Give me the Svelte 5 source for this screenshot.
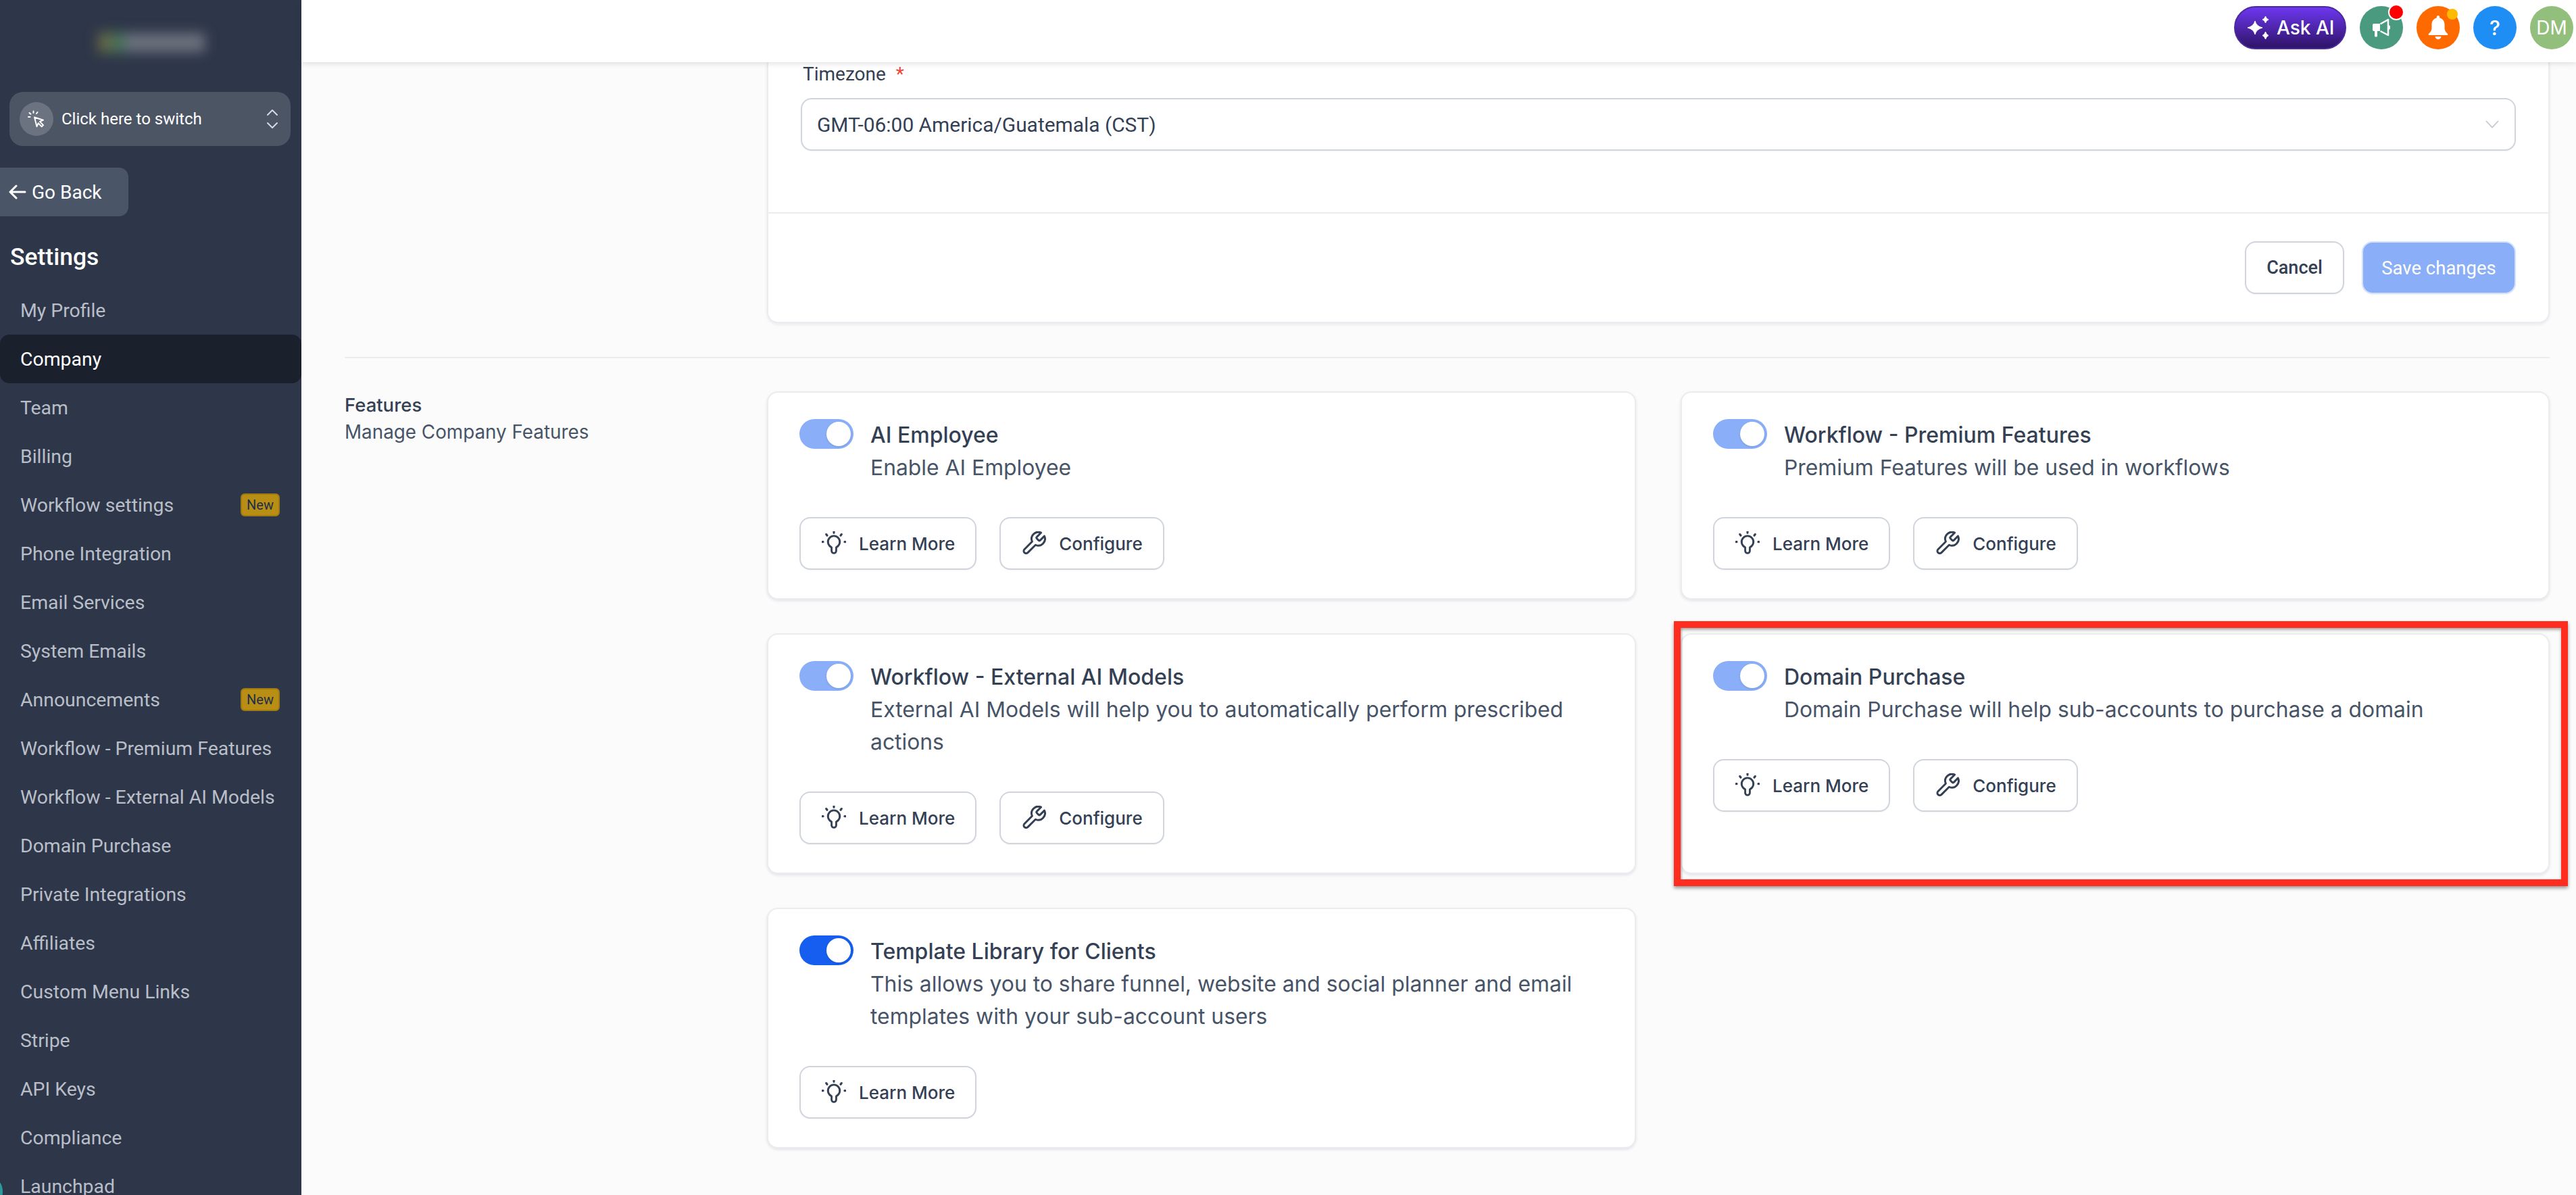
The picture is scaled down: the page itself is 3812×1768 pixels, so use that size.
<script>
  const nav = [
    { label: 'My Profile' }, { label: 'Company', active: true }, { label: 'Team' }, { label: 'Billing' },
    { label: 'Workflow settings', badge: true }, { label: 'Phone Integration' }, { label: 'Email Services' },
    { label: 'System Emails' }, { label: 'Announcements', badge: true }, { label: 'Workflow - Premium Features' },
    { label: 'Workflow - External AI Models' }, { label: 'Domain Purchase' }, { label: 'Private Integrations' },
    { label: 'Affiliates' }, { label: 'Custom Menu Links' }, { label: 'Stripe' }, { label: 'API Keys' },
    { label: 'Compliance' }, { label: 'Launchpad' }
  ];
  const features = [
    { title: 'AI Employee', desc: 'Enable AI Employee', configure: true },
    { title: 'Workflow - Premium Features', desc: 'Premium Features will be used in workflows', configure: true },
    { title: 'Workflow - External AI Models', desc: 'External AI Models will help you to automatically perform prescribed actions', configure: true },
    { title: 'Domain Purchase', desc: 'Domain Purchase will help sub-accounts to purchase a domain', configure: true },
    { title: 'Template Library for Clients', desc: 'This allows you to share funnel, website and social planner and email templates with your sub-account users', strong: true }
  ];
</script>

<div class="page">
  <aside class="sidebar">
    <div class="logo">
      <span class="logo-mark"></span>
      <span class="logo-text"></span>
    </div>
    <div class="switcher">
      <span class="switch-icon">
        <svg viewBox="0 0 26 26" width="26" height="26" fill="none" stroke="#fff" stroke-width="2" stroke-linecap="round" stroke-linejoin="round">
          <path d="M10 10.500l13 4.200-5 2.200 5 5.200-2.300 2.300-5-5.200-2.200 5z" />
          <path d="M8.500 1.500v2.500M2.500 4l2 1.800M1 10h2.500M14.500 3l-1.500 2" />
        </svg>
      </span>
      <span class="switch-text">Click here to switch</span>
      <svg class="updown" viewBox="0 0 18 30" width="18" height="30" fill="none" stroke="#d5d9e0" stroke-width="2" stroke-linecap="round" stroke-linejoin="round">
        <path d="M2 9l7-7 7 7M2 21l7 7 7-7" />
      </svg>
    </div>
    <div class="goback">
      <svg viewBox="0 0 26 22" width="26" height="22" fill="none" stroke="#fff" stroke-width="3" stroke-linecap="round" stroke-linejoin="round">
        <path d="M24 11H3M11 2l-9 9 9 9" />
      </svg>
      <span>Go Back</span>
    </div>
    <h2 class="settings">Settings</h2>
    <nav class="nav">
      {#each nav as item}
        <div class="nav-item" class:active={item.active}>
          <span>{item.label}</span>
          {#if item.badge}<span class="badge">New</span>{/if}
        </div>
      {/each}
    </nav>
    <span class="chat-peek"></span>
  </aside>

  <div class="main">
    <header class="topbar">
      <div class="ask">
        <svg viewBox="0 0 33 36" width="33" height="36" fill="#fff" stroke="#fff" stroke-width="1" stroke-linejoin="round">
          <path d="M12 8Q14 16 23 18Q14 20 12 28Q10 20 1 18Q10 16 12 8z" />
          <path d="M27.500 1Q28.500 5 32 6Q28.500 7 27.500 11Q26.500 7 23 6Q26.500 5 27.500 1z" />
          <path d="M27.500 24Q28.500 28 32 29.500Q28.500 31 27.500 35Q26.500 31 23 29.500Q26.500 28 27.500 24z" />
        </svg>
        <span>Ask AI</span>
      </div>
      <div class="circle green">
        <svg viewBox="0 0 28 28" width="28" height="28">
          <path d="M3 8h9v11H8v7a1.500 1.500 0 0 1-1.500 1.500h-1A1.500 1.500 0 0 1 4 26v-7H3a2 2 0 0 1-2-2v-7a2 2 0 0 1 2-2z" fill="#fff" />
          <path d="M12.500 8.500L24 2v23l-11.500-6" fill="none" stroke="#fff" stroke-width="2.500" stroke-linejoin="round" />
          <rect x="24" y="10.500" width="3" height="6" rx="1.500" fill="#fff" />
        </svg>
        <span class="dot red"></span>
      </div>
      <div class="circle orange">
        <svg viewBox="0 0 30 36" width="30" height="36" fill="#fff">
          <path d="M15 0c1.300 0 2.200 1 2.200 2.200v1.300C21.700 4.700 24.500 8.500 24.500 13v5c0 4 1.500 6 4.500 9 .8.800.4 2-.8 2H1.800c-1.200 0-1.600-1.200-.8-2 3-3 4.500-5 4.500-9v-5c0-4.500 2.800-8.300 7.300-9.500V2.200C12.800 1 13.700 0 15 0z" />
          <path d="M10.500 31h9c-.4 2.600-2.200 4.300-4.500 4.300s-4.100-1.700-4.500-4.300z" />
        </svg>
        <span class="dot yellow"></span>
      </div>
      <div class="circle blue"><span class="q">?</span></div>
      <div class="circle avatar">DM</div>
    </header>

    <div class="content">
      <section class="top-section">
        <div></div>
        <div class="form-card">
          <div class="form-body">
            <div class="field-label">Timezone <span class="req">*</span></div>
            <div class="select">
              <span>GMT-06:00 America/Guatemala (CST)</span>
              <svg viewBox="0 0 20 12" width="20" height="12" fill="none" stroke="#c4c7cc" stroke-width="1.800"><path d="M1 1l9 9.500L19 1" /></svg>
            </div>
          </div>
          <div class="form-foot">
            <button class="btn plain">Cancel</button>
            <button class="btn save">Save changes</button>
          </div>
        </div>
      </section>

      <section class="features">
        <div class="intro">
          <div class="intro-title">Features</div>
          <div class="intro-sub">Manage Company Features</div>
        </div>
        <div class="grid">
          {#each features as f}
            <div class="card">
              <div class="card-head">
                <span class="toggle" class:strong={f.strong}><span class="knob"></span></span>
                <div class="card-text">
                  <div class="card-title">{f.title}</div>
                  <div class="card-desc">{f.desc}</div>
                </div>
              </div>
              <div class="actions">
                <button class="btn act">
                  <svg viewBox="0.500 0.500 23 23" width="36" height="36" fill="none" stroke="#344054" stroke-width="1.800" stroke-linecap="round" stroke-linejoin="round">
                    <path d="M9.800 15.700a5.600 5.600 0 1 1 4.400 0v3.300a2.200 2.200 0 0 1-4.400 0z" />
                    <path d="M12 .8v1.200M4.800 3.400l.8 1.100M19.200 3.400l-.8 1.100M1.200 10.500h.6M22.200 10.500h.6" stroke-width="2" />
                  </svg>
                  <span>Learn More</span>
                </button>
                {#if f.configure}
                  <button class="btn act">
                    <svg viewBox="1.200 1.200 21.800 21.800" width="36" height="36" fill="none" stroke="#344054" stroke-width="1.800" stroke-linecap="round" stroke-linejoin="round">
                      <path d="M14.700 6.300a1 1 0 0 0 0 1.400l1.600 1.600a1 1 0 0 0 1.400 0l3.770-3.770a6 6 0 0 1-7.940 7.940l-6.910 6.910a2.120 2.120 0 0 1-3-3l6.910-6.910a6 6 0 0 1 7.940-7.940l-3.760 3.760z" />
                    </svg>
                    <span>Configure</span>
                  </button>
                {/if}
              </div>
            </div>
          {/each}
        </div>
      </section>
    </div>
  </div>

  <div class="annotation"></div>
</div>

<style>
  :global(body) { margin: 0; background: #fbfbfc; }
  .page { position: relative; display: flex; width: 3812px; height: 1768px; overflow: hidden; background: #fbfbfc; font-family: Inter, "Liberation Sans", sans-serif; }

  .sidebar { position: relative; flex: 0 0 446px; height: 1768px; overflow: hidden; background: #2e3749; font-family: Roboto, "Liberation Sans", sans-serif; color: #fff; box-sizing: border-box; }
  .logo { display: flex; align-items: center; height: 136px; padding-left: 145px; padding-bottom: 10px; box-sizing: border-box; filter: blur(9px); }
  .logo-mark { width: 40px; height: 30px; background: linear-gradient(90deg, #6f6540, #3d7560); }
  .logo-text { width: 118px; height: 28px; background: #6c717d; }
  .switcher { display: flex; align-items: center; height: 80px; margin: 0 16px 0 14px; padding: 0 18px 0 15px; border-radius: 20px; background: #4c5564; box-sizing: border-box; }
  .switch-icon { display: flex; align-items: center; justify-content: center; flex: 0 0 50px; height: 50px; border-radius: 50%; background: #6b7280; }
  .switch-text { flex: 1; margin-left: 12px; font-size: 24px; font-weight: 450; color: #fff; }
  .goback { display: flex; align-items: center; gap: 8px; width: 190px; height: 72px; margin-top: 32px; padding-left: 13px; border-radius: 0 14px 14px 0; background: #4a5568; box-sizing: border-box; font-size: 28px; font-weight: 450; }
  .settings { margin: 36px 0 0 15px; font-size: 35.500px; line-height: 48px; font-weight: 500; color: #fff; }
  .nav { display: flex; flex-direction: column; margin-top: 19px; }
  .nav-item { display: flex; align-items: center; justify-content: space-between; flex: 0 0 72px; height: 72px; padding: 0 32px 0 30px; box-sizing: border-box; border-radius: 14px; font-size: 28.400px; color: #b9bec8; }
  .nav-item.active { background: #1a202c; color: #fff; font-weight: 450; }
  .badge { display: flex; align-items: center; justify-content: center; width: 58px; height: 34px; box-sizing: border-box; border: 2px solid #a17b12; border-radius: 6px; background: #b98e14; color: #1d2f4a; font-size: 20px; font-weight: 450; }
  .chat-peek { position: absolute; left: -16px; bottom: -12px; width: 20px; height: 34px; border-radius: 50%; background: #2b9a9a; }

  .main { flex: 1; min-width: 0; display: flex; flex-direction: column; }
  .topbar { position: relative; z-index: 2; flex: 0 0 92px; display: flex; align-items: center; justify-content: flex-end; gap: 20px; padding: 0 4px 10px 0; box-sizing: border-box; background: #fff; box-shadow: 0 2px 8px rgba(16, 24, 40, .13); }
  .ask { display: flex; align-items: center; gap: 11px; width: 166px; height: 64px; box-sizing: border-box; padding-left: 17px; border: 2px solid #4a2a9c; border-radius: 32px; background: linear-gradient(180deg, #6e37f0, #2e1366); color: #fff; font-size: 28px; font-weight: 500; }
  .circle { position: relative; display: flex; align-items: center; justify-content: center; width: 64px; height: 64px; border-radius: 50%; }
  .green { background: #4a9a80; }
  .orange { background: #ff6a00; }
  .blue { background: #1e8ef5; }
  .avatar { background: #93bf7c; color: #fff; font-size: 28px; font-weight: 400; }
  .q { color: #fff; font-size: 30px; font-weight: 500; }
  .dot { position: absolute; border-radius: 50%; }
  .red { top: -3px; right: -2px; width: 20px; height: 20px; background: #ff0000; border: 2px solid #fff; }
  .yellow { top: 4px; right: 3px; width: 16px; height: 16px; background: #ffbb00; }

  .content { flex: 1; min-height: 0; overflow: hidden; padding: 0 39px 0 64px; }
  .top-section { display: grid; grid-template-columns: 625px 1fr; padding-bottom: 50px; border-bottom: 2px solid #eaecf0; margin-bottom: 49px; }
  .form-card { background: #fff; border: 2px solid #eaecf0; border-top: 0; border-radius: 0 0 16px 16px; box-shadow: 0 2px 4px rgba(16, 24, 40, .08); }
  .form-body { padding: 0 48px 91px; border-bottom: 2px solid #eaecf0; }
  .field-label { height: 36px; line-height: 36px; margin-bottom: 17px; padding-left: 3px; font-family: Roboto, "Liberation Sans", sans-serif; font-size: 28px; font-weight: 450; color: #344054; }
  .req { margin-left: 8px; color: #f04438; }
  .select { display: flex; align-items: center; justify-content: space-between; height: 78px; box-sizing: border-box; padding: 0 23px 0 22px; border: 2px solid #d0d5dd; border-radius: 16px; background: #fff; box-shadow: 0 1px 2px rgba(16, 24, 40, .05); font-family: Roboto, "Liberation Sans", sans-serif; font-size: 29.900px; color: #344054; }
  .form-foot { display: flex; justify-content: flex-end; gap: 26px; padding: 41px 48px 41px; }
  .btn { display: inline-flex; align-items: center; justify-content: center; height: 78px; box-sizing: border-box; border: 2px solid #d0d5dd; border-radius: 16px; background: #fff; box-shadow: 0 1px 2px rgba(16, 24, 40, .05); color: #344054; font-weight: 500; font-size: 26px; }
  .plain { width: 147px; font-size: 27px; font-family: Roboto, "Liberation Sans", sans-serif; }
  .save { width: 228px; font-size: 27.500px; font-weight: 450; font-family: Roboto, "Liberation Sans", sans-serif; background: #8aaff8; border-color: #d1e0fd; color: #fff; }

  .features { display: grid; grid-template-columns: 625px 1fr; }
  .intro-title { font-size: 27.500px; line-height: 40px; color: #344054; font-weight: 500; }
  .intro-sub { font-size: 27.800px; line-height: 40px; color: #475467; }
  .grid { display: grid; grid-template-columns: 1fr 1fr; align-items: stretch; column-gap: 66px; row-gap: 50px; }
  .card { background: #fff; border: 2px solid #eaecf0; border-radius: 16px; box-shadow: 0 2px 4px rgba(16, 24, 40, .1); padding: 39px 46px 42px; box-sizing: border-box; }
  .card-head { display: flex; gap: 25px; }
  .toggle { flex: 0 0 80px; display: flex; align-items: center; justify-content: flex-end; height: 44px; padding-right: 4px; box-sizing: border-box; border-radius: 22px; background: #8aaff8; }
  .toggle.strong { background: #155eef; }
  .knob { width: 36px; height: 36px; border-radius: 50%; background: #fff; box-shadow: 0 1px 3px rgba(16, 24, 40, .15); }
  .card-title { font-size: 32px; line-height: 48px; font-weight: 500; color: #344054; }
  .card-desc { font-size: 31.850px; line-height: 48px; color: #475467; }
  .actions { display: flex; gap: 34px; margin-top: 49px; }
  .act { gap: 19px; padding: 0 30px 0 31px; font-family: Inter, "Liberation Sans", sans-serif; }

  .annotation { position: absolute; left: 2477px; top: 919px; width: 1323px; height: 392px; box-sizing: border-box; border: 10px solid #fe2d1f; box-shadow: 0 3px 5px rgba(0, 0, 0, .4), inset 0 3px 4px rgba(0, 0, 0, .3), inset 2px 0 3px rgba(0, 0, 0, .15); pointer-events: none; }
</style>
